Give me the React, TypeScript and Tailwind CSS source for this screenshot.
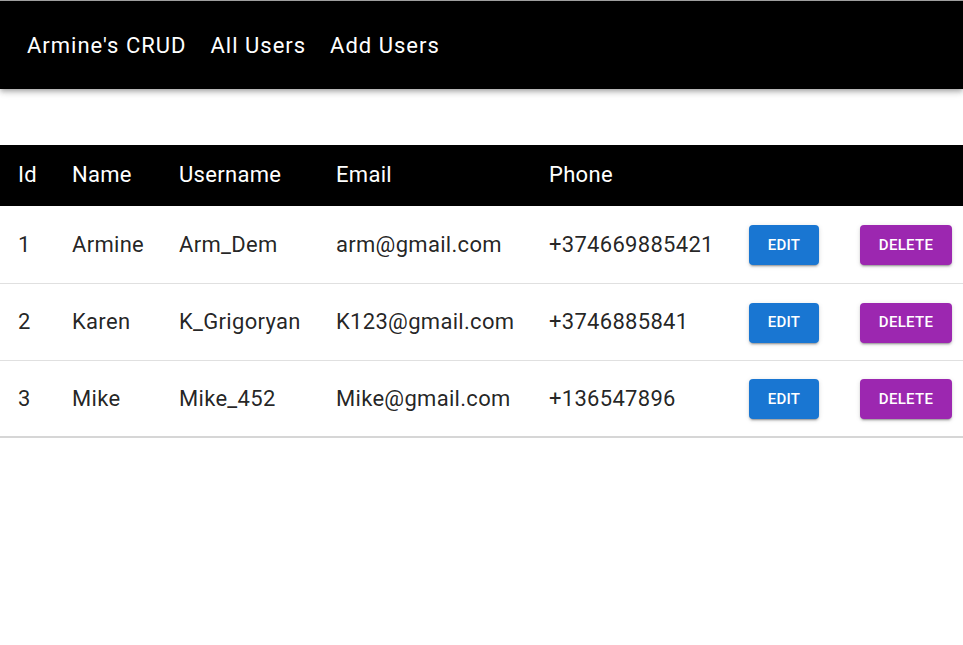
const users = [
  { id: 1, name: "Armine", username: "Arm_Dem", email: "arm@gmail.com", phone: "+374669885421" },
  { id: 2, name: "Karen", username: "K_Grigoryan", email: "K123@gmail.com", phone: "+3746885841" },
  { id: 3, name: "Mike", username: "Mike_452", email: "Mike@gmail.com", phone: "+136547896" },
];

export default function App() {
  return (
    <div className="min-h-[645px] bg-white overflow-hidden font-['Roboto',sans-serif]">
      {/* App bar */}
      <header className="h-[89px] bg-black border-t border-[#9e9e9e] flex items-center gap-6 px-[27px] text-white text-[22px] tracking-[1px] shadow-[0_2px_4px_-1px_rgba(0,0,0,0.2),0_4px_5px_0_rgba(0,0,0,0.14),0_1px_10px_0_rgba(0,0,0,0.12)]">
        <span>Armine's CRUD</span>
        <span>All Users</span>
        <span>Add Users</span>
      </header>

      <div className="mt-[56px] w-[968px]">
        <table className="w-[968px] table-fixed border-collapse text-left tracking-[0.3px]">
          <colgroup>
            <col className="w-[56px]" />
            <col className="w-[107px]" />
            <col className="w-[157px]" />
            <col className="w-[213px]" />
            <col className="w-[200px]" />
            <col className="w-[111px]" />
            <col className="w-[124px]" />
          </colgroup>
          <thead>
            <tr className="bg-black text-white text-[22px] h-[61px]">
              <th className="pl-[18px] pr-4 pb-0.5 font-normal">Id</th>
              <th className="px-4 pb-0.5 font-normal">Name</th>
              <th className="px-4 pb-0.5 font-normal">Username</th>
              <th className="px-4 pb-0.5 font-normal">Email</th>
              <th className="px-4 pb-0.5 font-normal">Phone</th>
              <th className="px-4"></th>
              <th className="px-4"></th>
            </tr>
          </thead>
          <tbody className="text-[22px] text-[rgba(0,0,0,0.87)]">
            {users.map((u, i) => (
              <tr
                key={u.id}
                className={`h-[77px] border-b ${i === users.length - 1 ? "border-[#d6d6d6] border-b-2" : "border-[#e0e0e0]"}`}
              >
                <td className="pl-[18px] pr-4">{u.id}</td>
                <td className="px-4">{u.name}</td>
                <td className="px-4">{u.username}</td>
                <td className="px-4">{u.email}</td>
                <td className="px-4">{u.phone}</td>
                <td className="px-4 pt-0.5">
                  <button className="w-[70px] h-[40px] rounded bg-[#1976d2] text-white text-[15px] font-medium tracking-[0.3px] uppercase shadow-[0_3px_1px_-2px_rgba(0,0,0,0.2),0_2px_2px_0_rgba(0,0,0,0.14),0_1px_5px_0_rgba(0,0,0,0.12)]">
                    Edit
                  </button>
                </td>
                <td className="px-4 pt-0.5">
                  <button className="w-[92px] h-[40px] rounded bg-[#9c27b0] text-white text-[15px] font-medium tracking-[0.3px] uppercase shadow-[0_3px_1px_-2px_rgba(0,0,0,0.2),0_2px_2px_0_rgba(0,0,0,0.14),0_1px_5px_0_rgba(0,0,0,0.12)]">
                    Delete
                  </button>
                </td>
              </tr>
            ))}
          </tbody>
        </table>
      </div>
    </div>
  );
}
